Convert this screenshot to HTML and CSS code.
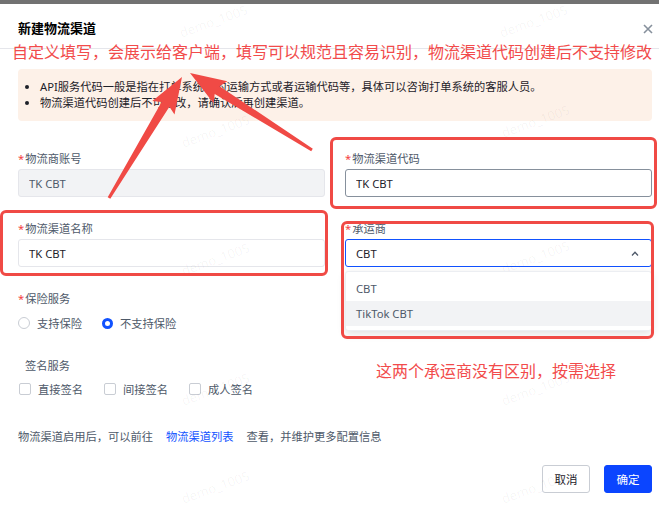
FILE: index.html
```html
<!DOCTYPE html>
<html lang="zh-CN">
<head>
  <meta charset="UTF-8">
  <meta name="viewport" content="width=device-width, initial-scale=1.0">
  <title>新建物流渠道</title>
  <link rel="stylesheet" href="styles.css">
</head>
<body>
  <div class="mask"></div>
  <div class="dialog">
    <header class="dialog-head">
      <h2>新建物流渠道</h2>
      <span class="close">
        <svg width="10" height="10" viewBox="0 0 10 10"><path d="M1 1L9 9M9 1L1 9" stroke="#86909c" stroke-width="1.6" fill="none"/></svg>
      </span>
    </header>

    <div class="dialog-body">
      <ul class="notice">
        <li>API服务代码一般是指在打单系统中的运输方式或者运输代码等，具体可以咨询打单系统的客服人员。</li>
        <li>物流渠道代码创建后不可修改，请确认后再创建渠道。</li>
      </ul>

      <div class="form-grid">
        <div class="field">
          <label><i>*</i>物流商账号</label>
          <input class="input" type="text" value="TK CBT" disabled>
        </div>
        <div class="field">
          <label><i>*</i>物流渠道代码</label>
          <input class="input input-hover" type="text" value="TK CBT">
        </div>
        <div class="field">
          <label><i>*</i>物流渠道名称</label>
          <input class="input" type="text" value="TK CBT">
        </div>
        <div class="field">
          <label><i>*</i>承运商</label>
          <div class="select open">
            <span>CBT</span>
            <svg width="8" height="5" viewBox="0 0 8 5"><path d="M1 4.5L4 1.2L7 4.5" stroke="#4e5969" stroke-width="1.3" fill="none"/></svg>
            <ul class="dropdown">
              <li>CBT</li>
              <li class="hover">TikTok CBT</li>
            </ul>
          </div>
        </div>
      </div>

      <div class="group">
        <label><i>*</i>保险服务</label>
        <div class="options">
          <span class="radio"><b></b>支持保险</span>
          <span class="radio checked"><b></b>不支持保险</span>
        </div>
      </div>

      <div class="group group-sign">
        <label class="plain">签名服务</label>
        <div class="options">
          <span class="check"><b></b>直接签名</span>
          <span class="check"><b></b>间接签名</span>
          <span class="check"><b></b>成人签名</span>
        </div>
      </div>

      <p class="tip">物流渠道启用后，可以前往<a href="#">物流渠道列表</a>查看，并维护更多配置信息</p>
    </div>

    <footer class="dialog-foot">
      <button class="btn">取消</button>
      <button class="btn btn-primary">确定</button>
    </footer>
  </div>

  <!-- watermark -->
  <span class="wm" style="left:178px;top:12px">demo_1005</span>
  <span class="wm" style="left:498px;top:12px">demo_1005</span>
  <span class="wm" style="left:180px;top:122px">demo_1005</span>
  <span class="wm" style="left:500px;top:112px">demo_1005</span>
  <span class="wm" style="left:180px;top:250px">demo_1005</span>
  <span class="wm" style="left:500px;top:248px">demo_1005</span>
  <span class="wm" style="left:180px;top:380px">demo_1005</span>
  <span class="wm" style="left:500px;top:380px">demo_1005</span>
  <span class="wm" style="left:180px;top:478px">demo_1005</span>
  <span class="wm" style="left:500px;top:478px">demo_1005</span>

  <!-- annotations -->
  <div class="mark mark-code"></div>
  <div class="mark mark-name"></div>
  <div class="mark mark-carrier"></div>
  <p class="note note-top">自定义填写，会展示给客户端，填写可以规范且容易识别，物流渠道代码创建后不支持修改</p>
  <p class="note note-carrier">这两个承运商没有区别，按需选择</p>
  <svg class="arrows" width="659" height="509" viewBox="0 0 659 509">
    <polygon points="107.7,197.2 161.6,102.1 152.3,101.1 182,77 174.5,114.5 169.4,106.7 110.3,198.8" fill="#f04a45"/>
    <polygon points="312.8,148.7 219.5,86.3 227.4,81.2 190,73 213.6,103.2 214.7,93.9 311.2,151.3" fill="#f04a45"/>
  </svg>
</body>
</html>
```

FILE: styles.css
```css
body {
  margin: 0;
  width: 659px;
  height: 509px;
  overflow: hidden;
  position: relative;
  background: #fff;
  font-family: "Noto Sans", "Noto Sans CJK SC", sans-serif;
  font-size: 11.25px;
  color: #1d2129;
}
.mask {
  height: 4px;
  background: #727272;
}
.dialog-head {
  height: 45px;
  padding: 3px 6px 0 18px;
  box-sizing: border-box;
  display: flex;
  align-items: center;
  justify-content: space-between;
  border-bottom: 1px solid #e5e6eb;
}
.dialog-head h2 {
  margin: 0;
  font-size: 13px;
  font-weight: bold;
  color: #000;
}
.close {
  display: flex;
  padding-top: 2px;
}
.dialog-body {
  padding: 20px 7px 0 18px;
}
.notice {
  margin: 0;
  padding: 10px 12px 10px 22px;
  background: #fdf1e8;
  border-radius: 4px;
  line-height: 16px;
  color: #1d2129;
}
.form-grid {
  margin-top: 28px;
  display: grid;
  grid-template-columns: 307px 307px;
  column-gap: 20px;
}
.field {
  margin-bottom: 22px;
}
label {
  display: block;
  line-height: 16px;
  padding-top: 2px;
  margin-bottom: 2px;
  color: #4e5969;
}
label i {
  font-style: normal;
  color: #f53f3f;
  margin-right: 1px;
}
.input {
  display: block;
  width: 100%;
  height: 28px;
  box-sizing: border-box;
  padding: 0 10px;
  border: 1px solid #e5e6eb;
  border-radius: 3px;
  background: #fff;
  font: inherit;
  color: #1d2129;
  outline: none;
}
.input:disabled {
  background: #f2f3f5;
  color: #4e5969;
}
.input-hover {
  border-color: #86909c;
}
.select {
  position: relative;
  height: 28px;
  box-sizing: border-box;
  padding: 0 12px 0 10px;
  border: 1px solid #1152ff;
  border-radius: 3px;
  display: flex;
  align-items: center;
  justify-content: space-between;
}
.dropdown {
  position: absolute;
  top: 31px;
  left: -1px;
  right: -1px;
  margin: 0;
  padding: 4px 0;
  list-style: none;
  background: #fff;
  border: 1px solid #eceef2;
  border-radius: 3px;
  box-shadow: 0 3px 8px rgba(0, 0, 0, 0.12);
  z-index: 2;
}
.dropdown li {
  height: 25px;
  line-height: 25px;
  padding: 0 10px;
  color: #4e5969;
}
.dropdown li.hover {
  background: #f2f3f5;
}
.group .options {
  display: flex;
  align-items: center;
  height: 20px;
  margin-top: 6px;
  color: #4e5969;
}
.group-sign {
  margin-top: 23px;
}
.group-sign .options {
  margin-top: 5px;
}
label.plain {
  padding-left: 7px;
}
.radio, .check {
  display: flex;
  align-items: center;
  margin-right: 20px;
}
.radio b {
  width: 10px;
  height: 10px;
  border: 1px solid #c9cdd4;
  border-radius: 50%;
  margin-right: 7px;
}
.radio.checked b {
  border: 3.5px solid #1152ff;
  width: 5px;
  height: 5px;
  background: #fff;
}
.check b {
  width: 10px;
  height: 10px;
  border: 1px solid #c9cdd4;
  border-radius: 2px;
  margin: 0 7px 0 1px;
}
.tip {
  margin: 30px 0 0;
  line-height: 16px;
  color: #4e5969;
}
.tip a {
  color: #1152ff;
  text-decoration: none;
  margin: 0 13px;
}
.dialog-foot {
  margin-top: 20px;
  padding-right: 7px;
  display: flex;
  justify-content: flex-end;
  gap: 14px;
}
.btn {
  width: 48px;
  height: 28px;
  padding: 0;
  border: 1px solid #c9cdd4;
  border-radius: 3px;
  background: #fff;
  font: inherit;
  font-size: 11.5px;
  color: #1d2129;
}
.btn-primary {
  background: #0b45ff;
  border-color: #0b45ff;
  color: #fff;
}
.wm {
  position: absolute;
  font-size: 13px;
  color: rgba(0, 0, 0, 0.045);
  transform: rotate(-20deg);
  pointer-events: none;
}
.mark {
  position: absolute;
  border: 3px solid #f04a45;
  border-radius: 6px;
  box-sizing: border-box;
  z-index: 3;
}
.mark-code {
  left: 330px;
  top: 137px;
  width: 327px;
  height: 72px;
}
.mark-name {
  left: 0;
  top: 210px;
  width: 328px;
  height: 66px;
}
.mark-carrier {
  left: 341px;
  top: 221px;
  width: 313px;
  height: 118px;
}
.note {
  position: absolute;
  margin: 0;
  color: #f24b4b;
  font-family: "Noto Sans CJK SC", sans-serif;
  white-space: nowrap;
  z-index: 3;
}
.note-top {
  left: 12px;
  top: 40px;
  font-size: 16px;
  line-height: 22px;
}
.note-carrier {
  left: 376px;
  top: 359px;
  font-size: 16px;
  line-height: 22px;
}
.arrows {
  position: absolute;
  left: 0;
  top: 0;
  z-index: 4;
}
```
